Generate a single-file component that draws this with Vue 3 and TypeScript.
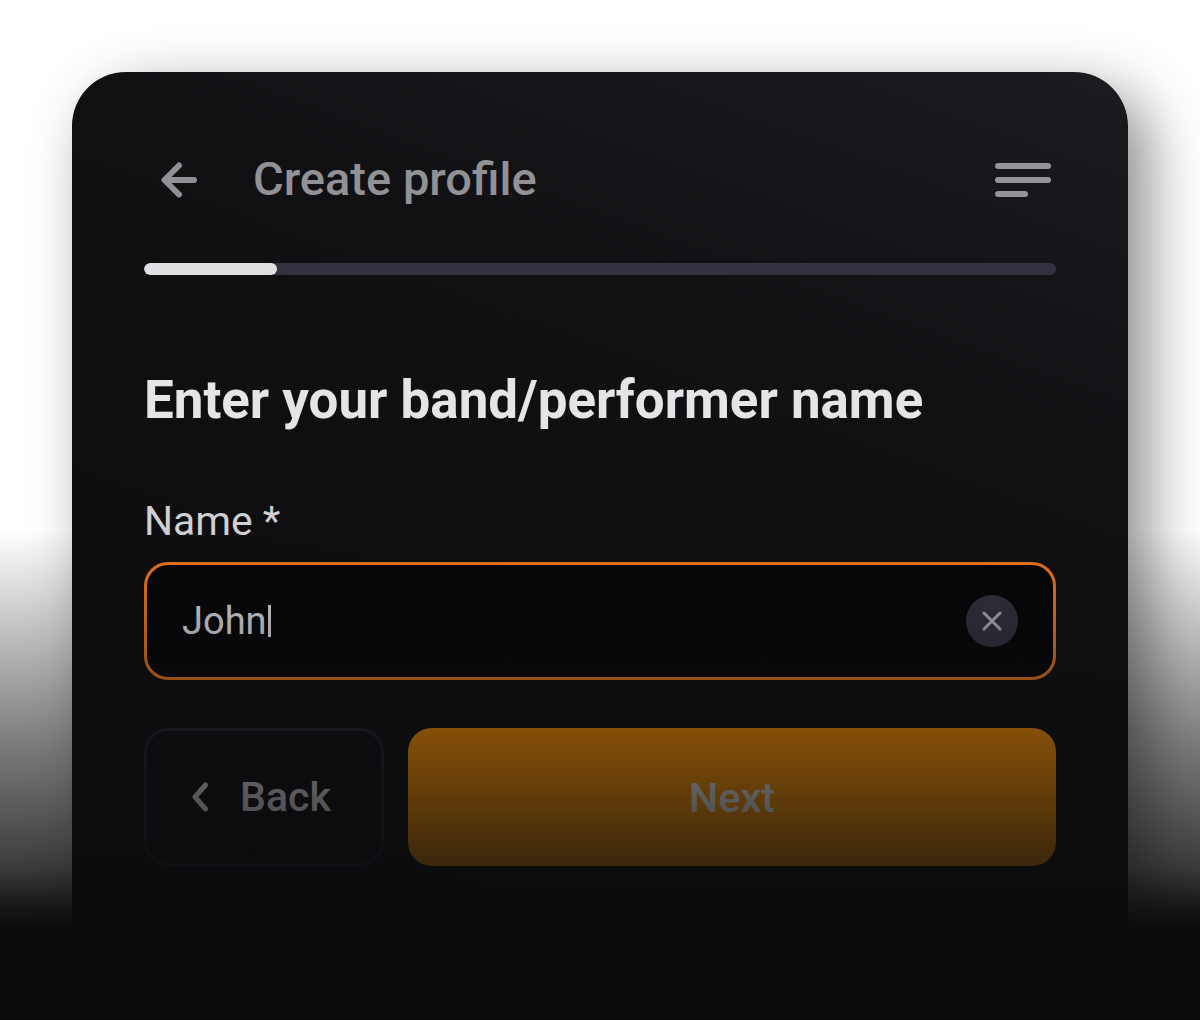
<script setup lang="ts">
const progress: number = 14.6
const name: string = 'John'
</script>

<template>
  <div class="page">
    <main class="card">
      <header class="top">
        <div class="top-left">
          <svg class="arrow" width="36" height="36" viewBox="0 0 36 36" fill="none">
            <path d="M33 18H4M18 3.500L3.500 18L18 32.500" stroke="#919195" stroke-width="6" stroke-linecap="round" stroke-linejoin="round" />
          </svg>
          <h1 class="title">Create profile</h1>
        </div>
        <svg class="menu" width="56" height="34" viewBox="0 0 56 34" fill="#949498">
          <rect x="0" y="0" width="56" height="6" rx="3" />
          <rect x="0" y="14" width="56" height="6" rx="3" />
          <rect x="0" y="28" width="33" height="6" rx="3" />
        </svg>
      </header>

      <div class="track">
        <div class="fill" :style="{ width: progress + '%' }"></div>
      </div>

      <h2 class="heading">Enter your band/performer name</h2>

      <label class="label">Name *</label>
      <div class="field">
        <span class="value">{{ name }}<span class="caret"></span></span>
        <span class="clear">
          <svg width="20" height="20" viewBox="0 0 20 20" fill="none">
            <path d="M2 2L18 18M18 2L2 18" stroke="#b0b0b5" stroke-width="3" stroke-linecap="round" />
          </svg>
        </span>
      </div>

      <div class="actions">
        <button class="back" type="button">
          <svg width="18" height="30" viewBox="0 0 18 30" fill="none">
            <path d="M15.500 3L5 15L15.500 27" stroke="#e5e5e7" stroke-width="5" stroke-linecap="round" stroke-linejoin="round" />
          </svg>
          <span>Back</span>
        </button>
        <button class="next" type="button">Next</button>
      </div>
    </main>
    <div class="fade"></div>
  </div>
</template>

<style scoped>
.page {
  position: relative;
  box-sizing: border-box;
  width: 1200px;
  height: 1020px;
  padding: 72px 72px 0;
  overflow: hidden;
  background: #ffffff;
  font-family: Roboto, "Liberation Sans", sans-serif;
}

.card {
  box-sizing: border-box;
  height: 1000px;
  padding: 78px 72px 0;
  border-radius: 54px;
  background: linear-gradient(200deg, #1c1c20 0%, #111114 28%, #0e0e11 60%, #0c0c0f 100%);
  box-shadow: 20px 20px 60px rgba(0, 0, 0, 0.46);
}

.top {
  display: flex;
  align-items: center;
  justify-content: space-between;
  height: 59px;
  padding: 0 5px 0 17px;
}

.top-left {
  display: flex;
  align-items: center;
  gap: 56px;
}

.title {
  margin: 0 0 2px;
  font-size: 47px;
  font-weight: 500;
  line-height: 56px;
  color: #929296;
}

.track {
  height: 12px;
  margin-top: 54px;
  border-radius: 6px;
  background: #34313e;
  overflow: hidden;
}

.fill {
  height: 100%;
  border-radius: 6px;
  background: #e0e0e2;
}

.heading {
  margin: 94px 0 0;
  font-size: 52.900px;
  font-weight: 700;
  line-height: 62px;
  color: #e5e5e7;
}

.label {
  display: block;
  margin-top: 66px;
  font-size: 40.800px;
  line-height: 48px;
  color: #d0d0d3;
}

.field {
  display: flex;
  align-items: center;
  justify-content: space-between;
  box-sizing: border-box;
  height: 118px;
  margin-top: 17px;
  padding: 0 35px;
  border: 3px solid #ee781c;
  border-radius: 24px;
  background: #060608;
}

.value {
  display: flex;
  align-items: center;
  font-size: 38px;
  color: #dcdcdf;
}

.caret {
  width: 3px;
  height: 32px;
  margin-left: 1px;
  background: #dcdcdf;
}

.clear {
  display: flex;
  align-items: center;
  justify-content: center;
  width: 52px;
  height: 52px;
  border-radius: 50%;
  background: #34313e;
}

.actions {
  display: flex;
  gap: 24px;
  margin-top: 48px;
}

.back,
.next {
  box-sizing: border-box;
  height: 138px;
  font-family: inherit;
  font-size: 41px;
  font-weight: 500;
  border-radius: 24px;
}

.back {
  display: flex;
  align-items: center;
  gap: 32px;
  width: 240px;
  padding: 0 0 0 43px;
  color: #e5e5e7;
  background: transparent;
  border: 3px solid #232328;
}

.next {
  flex: 1;
  font-size: 41.500px;
  color: #ececec;
  background: #ff9400;
  border: none;
}

.fade {
  position: absolute;
  inset: 0;
  pointer-events: none;
  background: linear-gradient(180deg, rgba(11, 12, 14, 0) 530px, rgba(11, 12, 14, 0.5) 728px, rgba(11, 12, 14, 0.8) 865px, rgba(11, 12, 14, 0.95) 905px, #0b0c0e 928px);
}
</style>
